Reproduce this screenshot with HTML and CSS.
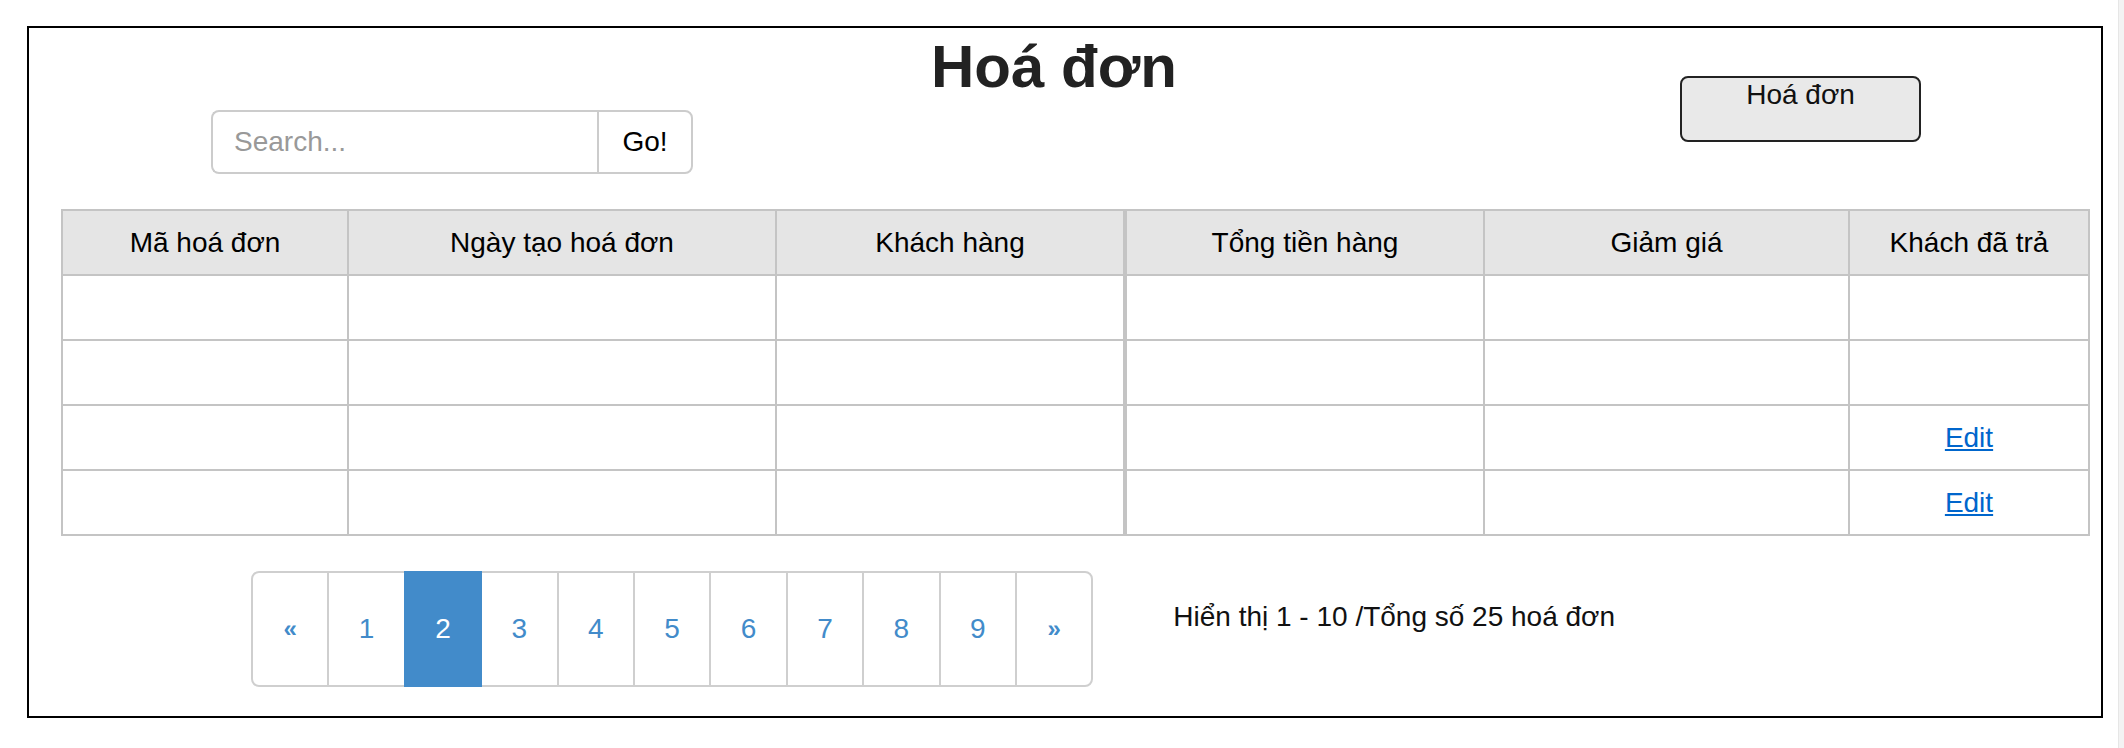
FILE: index.html
```html
<!DOCTYPE html>
<html lang="vi">
<head>
<meta charset="utf-8">
<title>Hoá đơn</title>
<link rel="stylesheet" href="styles.css">
</head>
<body>
<div class="frame">
  <div class="header">
    <div class="search">
      <input class="search-input" type="text" placeholder="Search...">
      <button class="search-btn" type="button">Go!</button>
    </div>
    <h1 class="title">Hoá đơn</h1>
    <div class="side-btn">Hoá đơn</div>
  </div>

  <div class="tables">
    <table class="grid grid-a">
      <thead>
        <tr>
          <th class="c1">Mã hoá đơn</th>
          <th class="c2">Ngày tạo hoá đơn</th>
          <th class="c3">Khách hàng</th>
        </tr>
      </thead>
      <tbody>
        <tr><td></td><td></td><td></td></tr>
        <tr><td></td><td></td><td></td></tr>
        <tr><td></td><td></td><td></td></tr>
        <tr><td></td><td></td><td></td></tr>
      </tbody>
    </table>
    <table class="grid grid-b">
      <thead>
        <tr>
          <th class="c4">Tổng tiền hàng</th>
          <th class="c5">Giảm giá</th>
          <th class="c6">Khách đã trả</th>
        </tr>
      </thead>
      <tbody>
        <tr><td></td><td></td><td></td></tr>
        <tr><td></td><td></td><td></td></tr>
        <tr><td></td><td></td><td><a class="edit" href="#">Edit</a></td></tr>
        <tr><td></td><td></td><td><a class="edit" href="#">Edit</a></td></tr>
      </tbody>
    </table>
  </div>

  <div class="footer">
    <ul class="pager">
      <li><a class="pg first" href="#">&laquo;</a></li>
      <li><a class="pg" href="#">1</a></li>
      <li><a class="pg active" href="#">2</a></li>
      <li><a class="pg" href="#">3</a></li>
      <li><a class="pg" href="#">4</a></li>
      <li><a class="pg" href="#">5</a></li>
      <li><a class="pg" href="#">6</a></li>
      <li><a class="pg" href="#">7</a></li>
      <li><a class="pg" href="#">8</a></li>
      <li><a class="pg" href="#">9</a></li>
      <li><a class="pg last" href="#">&raquo;</a></li>
    </ul>
    <div class="summary">Hiển thị 1 - 10 /Tổng số 25 hoá đơn</div>
  </div>
</div>
<div class="scroll-track"></div>
</body>
</html>
```

FILE: styles.css
```css
* {
  box-sizing: border-box;
}

html, body {
  margin: 0;
  padding: 0;
  background: #fff;
}

body {
  display: flex;
  align-items: flex-start;
  font-family: "Liberation Sans", Arial, Helvetica, sans-serif;
  font-size: 28px;
  color: #000;
  height: 748px;
  overflow: hidden;
}

.frame {
  margin: 26px 0 0 27px;
  width: 2076px;
  border: 2px solid #000;
  padding: 0 0 29px 0;
}

/* header */
.header {
  display: flex;
  align-items: flex-start;
  padding-left: 182px;
}

.search {
  display: flex;
  margin-top: 82px;
  height: 64px;
}

.search-input {
  width: 386px;
  height: 64px;
  border: 2px solid #cccccc;
  border-right: none;
  border-radius: 8px 0 0 8px;
  padding: 0 21px;
  font-family: inherit;
  font-size: 28px;
  color: #333;
  outline: none;
  background: #fff;
}

.search-input::placeholder {
  color: #999999;
}

.search-btn {
  width: 96px;
  height: 64px;
  border: 2px solid #cccccc;
  border-radius: 0 8px 8px 0;
  background: #fff;
  font-family: inherit;
  font-size: 28px;
  color: #000;
  padding: 0;
}

.title {
  margin: 5px 0 0 111px;
  width: 500px;
  text-align: center;
  font-size: 60px;
  line-height: 67px;
  font-weight: 700;
  color: #222;
}

.side-btn {
  margin: 48px 0 0 376px;
  width: 241px;
  height: 66px;
  border: 2px solid #222;
  border-radius: 8px;
  background: #e9e9e9;
  text-align: center;
  font-size: 28px;
  line-height: 32px;
  padding-top: 1px;
  color: #111;
}

/* tables */
.tables {
  display: flex;
  margin: 35px 0 0 32px;
}

.grid {
  border-collapse: separate;
  border-spacing: 0;
  table-layout: fixed;
  border-left: 2px solid #c4c4c4;
  border-top: 2px solid #c4c4c4;
}

.grid-a {
  width: 1064px;
}

.grid-b {
  width: 965px;
}

.grid th,
.grid td {
  box-sizing: border-box;
  height: 65px;
  padding: 0;
  border-right: 2px solid #c4c4c4;
  border-bottom: 2px solid #c4c4c4;
  text-align: center;
  vertical-align: middle;
  font-size: 28px;
  font-weight: 400;
  color: #000;
}

.grid th {
  background: #e5e5e5;
}

.c1 { width: 286px; }
.c2 { width: 428px; }
.c3 { width: 348px; }
.c4 { width: 358px; }
.c5 { width: 365px; }
.c6 { width: 240px; }

.edit {
  color: #0066cc;
  text-decoration: underline;
}

/* footer */
.footer {
  display: flex;
  align-items: flex-start;
  margin-top: 35px;
  padding-left: 222px;
}

.pager {
  display: flex;
  list-style: none;
  margin: 0;
  padding: 0;
}

.pg {
  display: block;
  width: 78.4px;
  height: 116px;
  margin-left: -2px;
  border: 2px solid #cfcfcf;
  text-align: center;
  line-height: 112px;
  font-size: 28px;
  color: #428bca;
  text-decoration: none;
  background: #fff;
  position: relative;
}

.pg.first,
.pg.last {
  font-size: 24px;
  font-weight: 700;
}

.pg.first {
  margin-left: 0;
  border-radius: 8px 0 0 8px;
}

.pg.last {
  border-radius: 0 8px 8px 0;
}

.pg.active {
  background: #428bca;
  border-color: #428bca;
  color: #fff;
  z-index: 2;
}

.summary {
  margin: 26px 0 0 80px;
  font-size: 28px;
  line-height: 40px;
  color: #111;
}

.scroll-track {
  margin-left: auto;
  width: 6px;
  height: 748px;
  background: #f3f3f3;
  border-left: 1px solid #e6e6e6;
}
```
